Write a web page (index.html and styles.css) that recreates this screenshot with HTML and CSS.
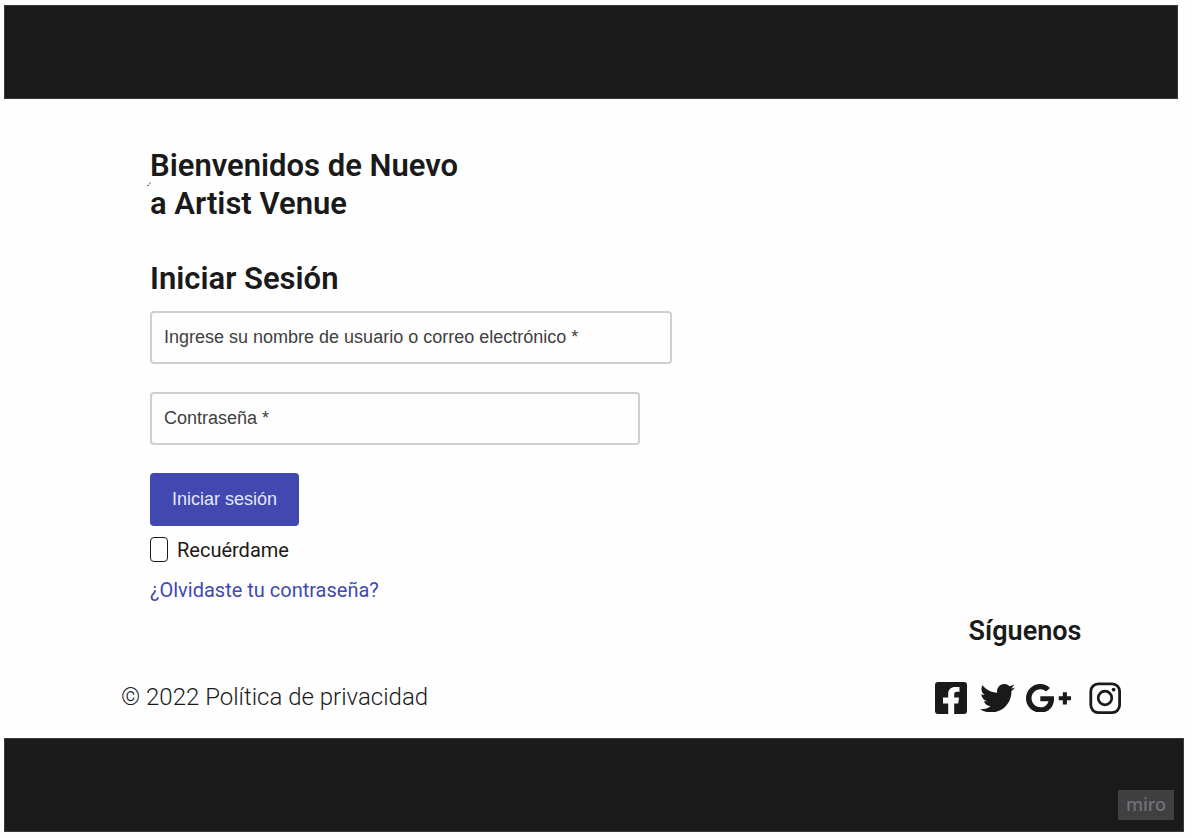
FILE: index.html
```html
<!DOCTYPE html>
<html lang="es">
<head>
<meta charset="utf-8">
<meta name="viewport" content="width=device-width, initial-scale=1">
<title>Iniciar Sesión - Artist Venue</title>
<link rel="stylesheet" href="styles.css">
</head>
<body>
<header class="bar bar-top"></header>
<main class="login">
  <h1 class="heading welcome">Bienvenidos de Nuevo<br>a Artist Venue
    <svg class="tick" viewBox="0 0 4 4" aria-hidden="true"><path d="M0 3.5h1.5M2 2.5L3.5 .5" stroke="#555" fill="none"/></svg>
  </h1>
  <h2 class="heading">Iniciar Sesión</h2>
  <form class="form">
    <input class="field field-user" type="text" aria-label="Nombre de usuario o correo electrónico" placeholder="Ingrese su nombre de usuario o correo electrónico *">
    <input class="field field-password" type="password" aria-label="Contraseña" placeholder="Contraseña *">
    <button class="submit" type="button">Iniciar sesión</button>
    <label class="remember"><input class="check" type="checkbox">Recuérdame</label>
    <a class="forgot" href="#">¿Olvidaste tu contraseña?</a>
  </form>
</main>
<footer>
  <div class="info">
    <p class="legal">© 2022 Política de privacidad</p>
    <section class="follow">
      <h3 class="follow-title">Síguenos</h3>
      <nav class="social" aria-label="Redes sociales">
        <a class="facebook" href="#" aria-label="Facebook"><svg viewBox="0 0 32 32"><path d="M3 0H29a3 3 0 0 1 3 3V29a3 3 0 0 1-3 3H19.200V21.500H23.200L24 15.600H19.200V12.500C19.200 10.700 20 9.800 21.800 9.800H24.500V4.900H20.500C15.900 4.900 13.200 7.400 13.200 11.700V15.600H8V21.500H13.200V32H3a3 3 0 0 1-3-3V3a3 3 0 0 1 3-3z"/></svg></a>
        <a class="twitter" href="#" aria-label="Twitter"><svg viewBox="0 48 512 416"><path d="M459.37 151.716c.325 4.548.325 9.097.325 13.645 0 138.72-105.583 298.558-298.558 298.558-59.452 0-114.68-17.219-161.137-47.106 8.447.974 16.568 1.299 25.34 1.299 49.055 0 94.213-16.568 130.274-44.832-46.132-.975-84.792-31.188-98.112-72.772 6.498.974 12.995 1.624 19.818 1.624 9.421 0 18.843-1.3 27.614-3.573-48.081-9.747-84.143-51.98-84.143-102.985v-1.299c13.969 7.797 30.214 12.67 47.431 13.319-28.264-18.843-46.781-51.005-46.781-87.391 0-19.492 5.197-37.36 14.294-52.954 51.655 63.675 129.3 105.258 216.365 109.807-1.624-7.797-2.599-15.918-2.599-24.04 0-57.828 46.782-104.934 104.934-104.934 30.213 0 57.502 12.67 76.67 33.137 23.715-4.548 46.456-13.32 66.599-25.34-7.798 24.366-24.366 44.833-46.132 57.827 21.117-2.273 41.584-8.122 60.426-16.243-14.292 20.791-32.161 39.308-52.628 54.253z"/></svg></a>
        <a class="google" href="#" aria-label="Google Plus"><svg viewBox="1 5 22 14"><path d="M23,11H21V9H19V11H17V13H19V15H21V13H23M8,11V13.4H12C11.8,14.4 10.8,16.4 8,16.4C5.6,16.4 3.7,14.4 3.7,12C3.7,9.6 5.6,7.6 8,7.6C9.4,7.6 10.3,8.2 10.8,8.7L12.7,6.9C11.5,5.7 9.9,5 8,5C4.1,5 1,8.1 1,12C1,15.9 4.1,19 8,19C12,19 14.7,16.2 14.7,12.2C14.7,11.7 14.7,11.4 14.6,11H8Z"/></svg></a>
        <a class="instagram" href="#" aria-label="Instagram"><svg viewBox="0 0 32 32"><rect x="1.800" y="1.800" width="28.800" height="28.800" rx="7.500" fill="none" stroke="#1a1a1a" stroke-width="2.800"/><circle cx="16" cy="16" r="6.800" fill="none" stroke="#1a1a1a" stroke-width="2.700"/><circle cx="24.600" cy="7.600" r="1.900"/></svg></a>
      </nav>
    </section>
  </div>
  <div class="bar bar-bottom"><span class="badge">miro</span></div>
</footer>
</body>
</html>
```
FILE: styles.css
```css
* { box-sizing: border-box; }
body {
  margin: 0;
  padding: 5px 8px 6px 4px;
  min-height: 100vh;
  display: flex;
  flex-direction: column;
  justify-content: space-between;
  background: #fefefe;
  color: #1a1a1a;
  font-family: Roboto, "Liberation Sans", sans-serif;
}
h1, h2, h3, p { margin: 0; }
.bar { height: 94px; background: #1a1a1a; border: 1px solid #3a3a3a; }
.bar-top { margin-right: 6px; }
.login { flex: 1; padding: 48px 32px 0 146px; }
.heading { font-size: 31px; line-height: 38px; font-weight: 600; }
.welcome { position: relative; margin-bottom: 37px; }
.tick { position: absolute; left: -3px; top: 35px; width: 4px; height: 4px; }
.form { display: flex; flex-direction: column; align-items: flex-start; margin-top: 13px; }
.field {
  width: 100%;
  height: 53px;
  margin-bottom: 28px;
  padding: 0 12px;
  border: 2px solid #cfcfcf;
  border-radius: 4px;
  background: #fefefe;
  color: #404040;
  font-family: "Liberation Sans", Arial, sans-serif;
  font-size: 18px;
}
.field::placeholder { color: #404040; opacity: 1; }
.field-user { max-width: 522px; }
.field-password { max-width: 490px; }
.submit {
  height: 53px;
  padding: 0 22px;
  border: 0;
  border-radius: 4px;
  background: #4149b1;
  color: #e4e6fa;
  font-family: "Liberation Sans", Arial, sans-serif;
  font-size: 18px;
}
.remember { display: flex; align-items: center; gap: 9px; margin-top: 11px; font-size: 20px; line-height: 24px; }
.check {
  appearance: none;
  width: 18px;
  height: 25px;
  margin: 0;
  border: 1px solid #1a1a1a;
  border-radius: 4px;
}
.check:checked { background: #4149b1; }
.forgot { margin-top: 16px; color: #4149b1; font-size: 20px; line-height: 24px; text-decoration: none; }
.info {
  display: flex;
  justify-content: space-between;
  align-items: flex-end;
  padding: 0 63px 24px 117px;
}
.legal { font-size: 24px; line-height: 34px; font-weight: 300; }
.follow-title { margin-bottom: 35px; padding-right: 6px; font-size: 27px; line-height: 32px; font-weight: 600; text-align: center; }
.social { display: flex; align-items: center; }
.social svg { display: block; width: 100%; fill: #1a1a1a; }
.facebook { width: 32px; margin-right: 13px; }
.twitter { width: 35px; margin-right: 11px; }
.google { width: 45px; margin-right: 18px; }
.instagram { width: 32px; }
.bar-bottom { display: flex; justify-content: flex-end; align-items: flex-end; padding: 0 9px 11px; }
.badge {
  width: 56px;
  height: 30px;
  background: #404040;
  color: #73717c;
  font-family: "Noto Sans", sans-serif;
  font-size: 18px;
  font-weight: 500;
  line-height: 28px;
  text-align: center;
}
```
